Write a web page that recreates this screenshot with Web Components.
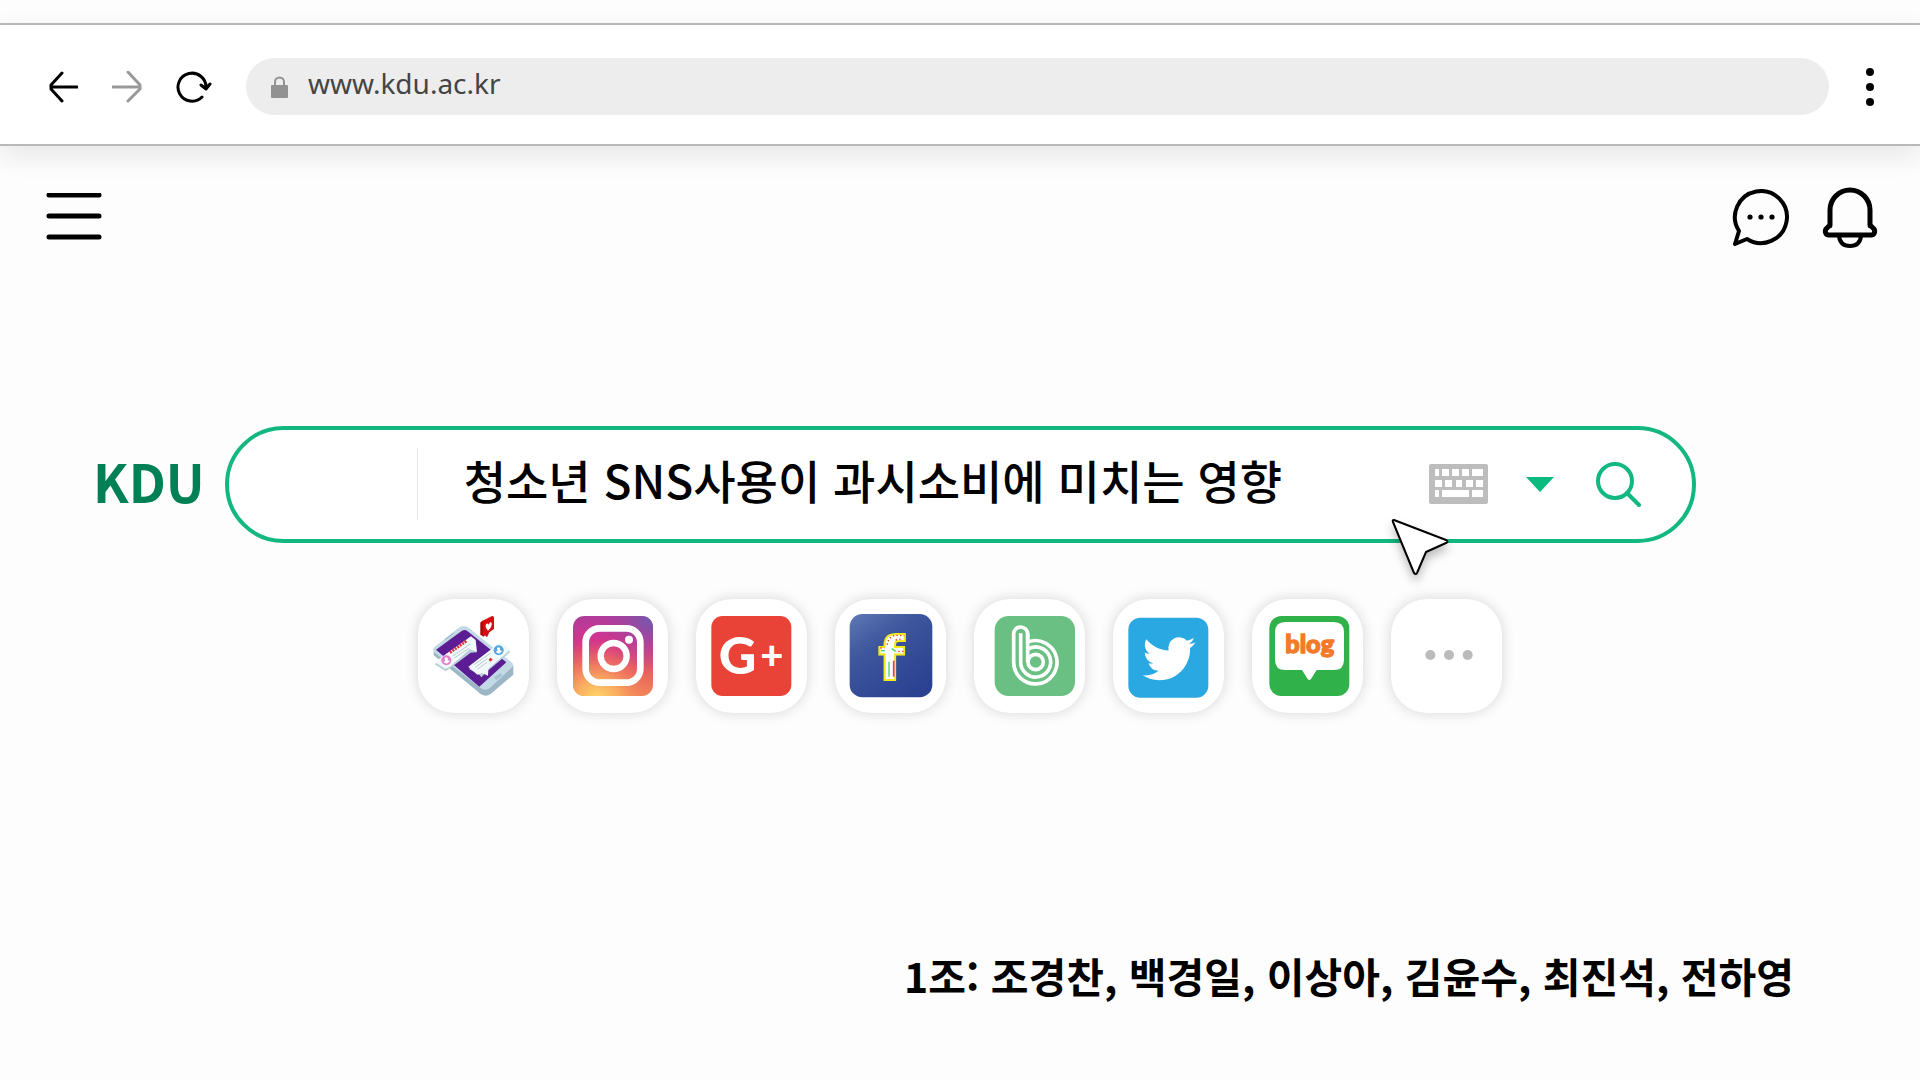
<!DOCTYPE html>
<html lang="ko">
<head>
<meta charset="utf-8">
<title>KDU</title>
<style>
	body {
		margin: 0;
		background: #fdfdfd;
		color: #000;
		font-family: "Noto Sans CJK KR", sans-serif;
	}
</style>
</head>
<body>

<kdu-page>
	<browser-bar slot="browser" url="www.kdu.ac.kr"></browser-bar>
	<page-toolbar slot="toolbar"></page-toolbar>
	<search-box slot="search" brand="KDU" query="청소년 SNS사용이 과시소비에 미치는 영향"></search-box>

	<app-tile label="SNS">
		<svg viewBox="50 57 333 342">
			<path fill="#9db6c6" d="M97 205 L336 255 V284 L268 342 Q253 352 238 342 L97 226Z"/>
			<path fill="#c3d9e6" d="M97 203 L170 145 Q186 132 202 143 L330 246 Q340 254 330 264 L268 322 Q253 336 238 324 L101 219Q94 212 97 203Z"/>
			<path fill="#5c1c93" d="M104 209 L181 153 Q189 147 197 152 L315 247 L234 320Z"/>
			<path fill="none" stroke="#8ea9bb" stroke-width="3" d="M132 178 L156 160"/>
			<path fill="#a9c0ce" d="M279 291 L298 279 L303 286 L284 301Z"/>
			<path fill="#b8cfda" d="M100 253 L211 177 L226 217 L208 218 L142 268 L133 274Z"/>
			<path fill="#f1f9fb" d="M100 246 L209 169 L223 180 L227 216 L206 207 L146 260 L132 266Z"/>
			<path fill="#b8cfda" d="M203 267 L300 191 L327 216 L262 270 L240 292 L234 284Z"/>
			<path fill="#f1f9fb" d="M201 260 L299 185 L327 209 L261 266 L260 287 L242 279 L228 284Z"/>
			<circle cx="135" cy="241" r="15" fill="#e37fcb"/>
			<path fill="#fff" d="M126 246 L132 242 Q127 234 134 232 Q141 232 139 240 L146 244 L136 251Z"/>
			<circle cx="292" cy="211" r="15" fill="#54a6dc"/>
			<path fill="#fff" d="M283 216 L289 212 Q284 204 291 202 Q298 202 296 210 L303 214 L293 221Z"/>
			<path fill="none" stroke="#e8262c" stroke-width="8" stroke-dasharray="6 3" d="M146 218 L197 182"/>
			<path fill="none" stroke="#b9c9d1" stroke-width="3" d="M154 228 L207 192 M159 234 L203 205 M218 254 L268 219 M223 261 L258 236 M228 268 L257 247"/>
			<path fill="#e8262c" d="M262 238 L268 233 L274 239 L266 245Z"/>
			<path fill="#a8060b" d="M237 128 L244 121 L251 165 L247 170 L237 164Z"/>
			<path fill="#d90b12" d="M244 122 L272 108 Q278 107 278 113 V147 L264 157 L257 172 L250 165 L244 166Z"/>
			<path fill="#fff" d="M260 152 Q250 141 254 133 Q259 128 262 134 Q266 124 271 128 Q273 140 260 152Z"/>
		</svg>
	</app-tile>

	<app-tile label="Instagram">
		<svg viewBox="468 57 333 342">
			<defs>
				<linearGradient id="ig-base" x1="0" y1="0" x2="0" y2="1">
					<stop offset="0" stop-color="#b03c9b"/>
					<stop offset=".3" stop-color="#d3348d"/>
					<stop offset=".65" stop-color="#e65a63"/>
					<stop offset="1" stop-color="#f08a56"/>
				</linearGradient>
				<radialGradient id="ig-sun" cx=".3" cy="1.05" r=".75">
					<stop offset="0" stop-color="#ffd86b"/>
					<stop offset=".35" stop-color="#fbb260" stop-opacity=".9"/>
					<stop offset="1" stop-color="#ee5a5a" stop-opacity="0"/>
				</radialGradient>
				<radialGradient id="ig-sky" cx="1" cy="0" r=".7">
					<stop offset="0" stop-color="#6a5cb0"/>
					<stop offset="1" stop-color="#a8409d" stop-opacity="0"/>
				</radialGradient>
			</defs>
			<rect x="516" y="108" width="240" height="240" rx="34" fill="url(#ig-base)"/>
			<rect x="516" y="108" width="240" height="240" rx="34" fill="url(#ig-sun)"/>
			<rect x="516" y="108" width="240" height="240" rx="34" fill="url(#ig-sky)"/>
			<rect x="554" y="145" width="164" height="163" rx="42" fill="none" stroke="#fff" stroke-width="20"/>
			<circle cx="638" cy="228" r="39" fill="none" stroke="#fff" stroke-width="19"/>
			<circle cx="684" cy="179" r="12" fill="#fff"/>
		</svg>
	</app-tile>

	<app-tile label="Google Plus">
		<svg viewBox="47 57 333 342">
			<rect x="93" y="108" width="240" height="240" rx="34" fill="#e84336"/>
			<text x="115" y="283" fill="#fff" font-family="Lato, sans-serif" font-weight="900" font-size="156">G</text>
			<text x="240" y="267" fill="#fff" font-family="Lato, sans-serif" font-weight="900" font-size="120">+</text>
		</svg>
	</app-tile>

	<app-tile label="Facebook">
		<svg viewBox="464 57 333 342">
			<defs>
				<linearGradient id="fb-base" x1="0" y1="0" x2=".7" y2="1">
					<stop offset="0" stop-color="#5f78b4"/>
					<stop offset=".4" stop-color="#3d569d"/>
					<stop offset="1" stop-color="#2a4291"/>
				</linearGradient>
			</defs>
			<rect x="508" y="102" width="248" height="250" rx="38" fill="url(#fb-base)"/>
			<text x="594" y="299" fill="#fff" stroke="#f2ea1c" stroke-width="6" font-family="DejaVu Sans, sans-serif" font-weight="700" font-size="180">f</text>
			<g fill="none">
				<path stroke="#e02aa8" stroke-width="5" d="M640 242 V290"/>
				<path stroke="#42d66b" stroke-width="4" d="M626 245 V290 M602 212 H614 M634 206 L646 214"/>
				<path stroke="#e33b20" stroke-width="4" stroke-dasharray="4 7" d="M620 194 L626 176 L642 166 L672 167 M600 204 H612 M654 214 H672 M646 180 L668 176"/>
			</g>
		</svg>
	</app-tile>

	<app-tile label="BAND">
		<svg viewBox="43 57 333 342">
			<rect x="105" y="108" width="241" height="240" rx="42" fill="#6ac082"/>
			<g fill="none" stroke="#fff" stroke-width="11">
				<path d="M162 246 V162 A21 21 0 0 1 204 162 V186 A65 65 0 1 1 162 246Z"/>
				<path d="M183 160 V246 A45 45 0 1 0 204 208"/>
				<path d="M204 160 V246"/>
				<circle cx="228" cy="246" r="23"/>
			</g>
		</svg>
	</app-tile>

	<app-tile label="Twitter">
		<svg viewBox="461 57 333 342">
			<rect x="507" y="113" width="240" height="240" rx="36" fill="#29a8e1"/>
			<path fill="#fff" transform="translate(550 157) scale(6.6)" d="M23.953 4.57a10 10 0 01-2.825.775 4.958 4.958 0 002.163-2.723c-.951.555-2.005.959-3.127 1.184a4.92 4.92 0 00-8.384 4.482C7.69 8.095 4.067 6.13 1.64 3.162a4.822 4.822 0 00-.666 2.475c0 1.71.87 3.213 2.188 4.096a4.904 4.904 0 01-2.228-.616v.06a4.923 4.923 0 003.946 4.827 4.996 4.996 0 01-2.212.085 4.936 4.936 0 004.604 3.417 9.867 9.867 0 01-6.102 2.105c-.39 0-.779-.023-1.17-.067a13.995 13.995 0 007.557 2.209c9.053 0 13.998-7.496 13.998-13.985 0-.21 0-.42-.015-.63A9.935 9.935 0 0024 4.59z"/>
		</svg>
	</app-tile>

	<app-tile label="Blog">
		<svg viewBox="38 57 333 342">
			<rect x="90" y="108" width="240" height="240" rx="36" fill="#31b14a"/>
			<path fill="#fff" d="M138 126 H283 Q314 126 314 157 V239 Q314 270 283 270 H232 L215 297 Q210 303 205 297 L188 270 H138 Q107 270 107 239 V157 Q107 126 138 126Z"/>
			<text x="211" y="219" text-anchor="middle" fill="#f37a29" stroke="#f37a29" stroke-width="4" stroke-linejoin="round" font-family="Lato, sans-serif" font-weight="900" font-size="76">blog</text>
		</svg>
	</app-tile>

	<app-tile label="더보기">
		<svg viewBox="457 57 333 342">
			<g fill="#bbb">
				<circle cx="575" cy="225" r="15"/>
				<circle cx="631" cy="225" r="15"/>
				<circle cx="687" cy="225" r="15"/>
			</g>
		</svg>
	</app-tile>

	<team-line slot="footer">1조: 조경찬, 백경일, 이상아, 김윤수, 최진석, 전하영</team-line>
</kdu-page>

<script>
const buttonReset = `
	button {
		display: block;
		flex: none;
		margin: 0;
		padding: 0;
		border: none;
		background: none;
		cursor: pointer;
	}

	svg {
		display: block;
	}
`;

function makeTemplate(html) {
	const template = document.createElement('template');
	template.innerHTML = html;
	return template;
}

const pageTemplate = makeTemplate(`
	<style>
		:host {
			display: flex;
			flex-direction: column;
			min-height: 100vh;
			overflow: hidden;
		}

		header {
			padding-top: 23px;
		}

		main {
			display: flex;
			flex-direction: column;
			gap: 56px;
			padding-top: 177px;
		}

		nav {
			display: flex;
			justify-content: center;
			gap: 28px;
		}

		footer {
			padding: 232px 126px 0;
		}
	</style>

	<header>
		<slot name="browser"></slot>
		<slot name="toolbar"></slot>
	</header>
	<main>
		<slot name="search"></slot>
		<nav><slot></slot></nav>
	</main>
	<footer><slot name="footer"></slot></footer>
`);

class KduPage extends HTMLElement {
	constructor() {
		super();
		this.attachShadow({ mode: 'open' });
		this.shadowRoot.appendChild(pageTemplate.content.cloneNode(true));
	}
}

const browserTemplate = makeTemplate(`
	<style>
		${buttonReset}

		:host {
			display: flex;
			align-items: center;
			gap: 34px;
			padding: 33px 45px 29px 48px;
			background: #fff;
			border-top: 2px solid #b9b9b9;
			border-bottom: 2px solid #b9b9b9;
			box-shadow: 0 10px 26px rgba(0, 0, 0, 0.09);
		}

		.address {
			display: flex;
			flex: 1;
			align-items: center;
			gap: 20px;
			height: 57px;
			box-sizing: border-box;
			padding: 0 25px;
			border-radius: 29px;
			background: #ededed;
		}

		input {
			flex: 1;
			min-width: 0;
			height: 40px;
			margin: 0 0 8px;
			padding: 0;
			border: none;
			outline: none;
			background: none;
			color: #444;
			font: 28px "Noto Sans", sans-serif;
		}
	</style>

	<button type="button" aria-label="뒤로">
		<svg width="30" height="32" fill="none" stroke="#000" stroke-width="3" stroke-linecap="round" stroke-linejoin="round">
			<path d="M29 16 H3 M14 2 L3 14 V18 L14 30"/>
		</svg>
	</button>
	<button type="button" aria-label="앞으로">
		<svg width="30" height="32" fill="none" stroke="#999" stroke-width="3" stroke-linecap="round" stroke-linejoin="round">
			<path d="M1 16 H28 M16 1 L28 14 V18 L16 30"/>
		</svg>
	</button>
	<button type="button" aria-label="새로고침">
		<svg width="36" height="32" fill="none" stroke="#000" stroke-width="3" stroke-linecap="round" stroke-linejoin="round">
			<path d="M26 26 A14 14 0 1 1 30 17 M25 14 L30 18 L34 13"/>
		</svg>
	</button>
	<div class="address">
		<svg width="17" height="22">
			<path d="M4 10 V6 A4 4 0 0 1 13 6 V10" fill="none" stroke="#929292" stroke-width="2"/>
			<rect y="9" width="17" height="13" rx="1" fill="#929292"/>
		</svg>
		<input type="text" aria-label="주소" spellcheck="false">
	</div>
	<button type="button" aria-label="메뉴">
		<svg width="12" height="38">
			<circle cx="7" cy="4" r="4"/>
			<circle cx="7" cy="19" r="4"/>
			<circle cx="7" cy="34" r="4"/>
		</svg>
	</button>
`);

class BrowserBar extends HTMLElement {
	constructor() {
		super();
		this.attachShadow({ mode: 'open' });
		this.shadowRoot.appendChild(browserTemplate.content.cloneNode(true));
		this.$input = this.shadowRoot.querySelector('input');
	}

	connectedCallback() {
		this.$input.value = this.getAttribute('url');
	}
}

const toolbarTemplate = makeTemplate(`
	<style>
		${buttonReset}

		:host {
			display: flex;
			align-items: center;
			justify-content: space-between;
			padding: 41px 42px 0 46px;
		}

		.actions {
			display: flex;
			align-items: center;
			gap: 32px;
		}
	</style>

	<button type="button" aria-label="전체 메뉴">
		<svg width="56" height="50" stroke="#000" stroke-width="5" stroke-linecap="round">
			<path d="M3 2 H53 M3 23 H53 M3 44 H53"/>
		</svg>
	</button>
	<div class="actions">
		<button type="button" aria-label="메시지">
			<svg width="58" height="58">
				<path d="M3 55 L7 42 A26 26 0 1 1 15 50Z" fill="none" stroke="#000" stroke-width="4" stroke-linejoin="round"/>
				<circle cx="18" cy="28" r="2.6"/>
				<circle cx="29" cy="28" r="2.6"/>
				<circle cx="40" cy="28" r="2.6"/>
			</svg>
		</button>
		<button type="button" aria-label="알림">
			<svg width="56" height="62" fill="none" stroke="#000" stroke-width="5" stroke-linejoin="round">
				<path d="M8 38 V23 A20 20 0 0 1 48 23 V38 Q48 39 49 39 L51 41 A4 4 0 0 1 50 48 H6 A4 4 0 0 1 5 41 L7 39 Q8 39 8 38Z"/>
				<path d="M17 49 Q18 59 28 59 Q38 59 39 49" stroke-width="4"/>
			</svg>
		</button>
	</div>
`);

class PageToolbar extends HTMLElement {
	constructor() {
		super();
		this.attachShadow({ mode: 'open' });
		this.shadowRoot.appendChild(toolbarTemplate.content.cloneNode(true));
	}
}

const searchTemplate = makeTemplate(`
	<style>
		${buttonReset}

		:host {
			display: flex;
			align-items: center;
			gap: 20px;
			padding: 0 224px 0 93px;
		}

		a {
			padding-bottom: 7px;
			color: #028055;
			font-size: 52px;
			font-weight: 700;
			line-height: 60px;
			text-decoration: none;
		}

		form {
			position: relative;
			display: flex;
			flex: 1;
			align-items: center;
			gap: 38px;
			height: 117px;
			box-sizing: border-box;
			padding: 0 50px 2px 188px;
			border: 4px solid #13b780;
			border-radius: 59px;
			background: #fff;
		}

		input {
			flex: 1;
			min-width: 0;
			height: 72px;
			box-sizing: border-box;
			margin: 0;
			padding: 0 0 10px 46px;
			border: none;
			border-left: 1px solid #e8e8e8;
			outline: none;
			background: none;
			color: #000;
			font-family: inherit;
			font-size: 46px;
			font-weight: 500;
		}

		/* mouse pointer resting on the lower edge of the field */
		.pointer {
			position: absolute;
			top: 89px;
			right: 243px;
			overflow: visible;
			filter: drop-shadow(0 6px 5px rgba(0, 0, 0, 0.25));
		}
	</style>

	<a href="#"></a>
	<form role="search">
		<input type="text" aria-label="검색어" spellcheck="false">
		<button type="button" aria-label="키보드">
			<svg width="59" height="40">
				<rect width="59" height="40" rx="2" fill="#bdbdbd"/>
				<path fill="#fff" d="M6 5h4v7h-4z M13 5h7v7h-7z M23 5h7v7h-7z M33 5h7v7h-7z M43 5h11v7h-11z M6 16h7v7h-7z M16 16h7v7h-7z M27 16h6v7h-6z M37 16h7v7h-7z M47 16h7v7h-7z M6 26h4v7h-4z M13 26h27v7h-27z M43 26h11v7h-11z"/>
			</svg>
		</button>
		<button type="button" aria-label="자동완성">
			<svg width="32" height="16"><path d="M0 1 H28 L14 16Z" fill="#0abb7d"/></svg>
		</button>
		<button type="submit" aria-label="검색">
			<svg width="46" height="46" fill="none" stroke="#13b780" stroke-width="4" stroke-linecap="round">
				<circle cx="19" cy="20" r="17"/>
				<path d="M31 32 L43 44"/>
			</svg>
		</button>
		<svg class="pointer" width="57" height="56">
			<path d="M2 1 L54 21 Q57 23 54 24 L34 33 L25 54 Q24 56 22 54 L1 3 Q0 1 2 1Z" fill="#fff" stroke="#000" stroke-width="2" stroke-linejoin="round"/>
		</svg>
	</form>
`);

class SearchBox extends HTMLElement {
	constructor() {
		super();
		this.attachShadow({ mode: 'open' });
		this.shadowRoot.appendChild(searchTemplate.content.cloneNode(true));
		this.$brand = this.shadowRoot.querySelector('a');
		this.$input = this.shadowRoot.querySelector('input');
		this.shadowRoot.querySelector('form').addEventListener(
			'submit',
			event => event.preventDefault()
		);
	}

	connectedCallback() {
		this.$brand.textContent = this.getAttribute('brand');
		this.$input.value = this.getAttribute('query');
	}
}

const tileTemplate = makeTemplate(`
	<style>
		:host {
			display: block;
		}

		a {
			display: block;
			width: 111px;
			height: 114px;
			border-radius: 36px;
			background: #fff;
			box-shadow: 0 0 14px rgba(0, 0, 0, 0.16);
		}

		::slotted(svg) {
			display: block;
			width: 100%;
			height: 100%;
		}
	</style>

	<a href="#"><slot></slot></a>
`);

class AppTile extends HTMLElement {
	constructor() {
		super();
		this.attachShadow({ mode: 'open' });
		this.shadowRoot.appendChild(tileTemplate.content.cloneNode(true));
	}

	connectedCallback() {
		this.shadowRoot.querySelector('a').setAttribute('aria-label', this.getAttribute('label'));
	}
}

const teamTemplate = makeTemplate(`
	<style>
		:host {
			display: block;
			font-size: 41px;
			font-weight: 700;
			line-height: 60px;
			text-align: right;
		}
	</style>

	<slot></slot>
`);

class TeamLine extends HTMLElement {
	constructor() {
		super();
		this.attachShadow({ mode: 'open' });
		this.shadowRoot.appendChild(teamTemplate.content.cloneNode(true));
	}
}

customElements.define('kdu-page', KduPage);
customElements.define('browser-bar', BrowserBar);
customElements.define('page-toolbar', PageToolbar);
customElements.define('search-box', SearchBox);
customElements.define('app-tile', AppTile);
customElements.define('team-line', TeamLine);
</script>
</body>
</html>
